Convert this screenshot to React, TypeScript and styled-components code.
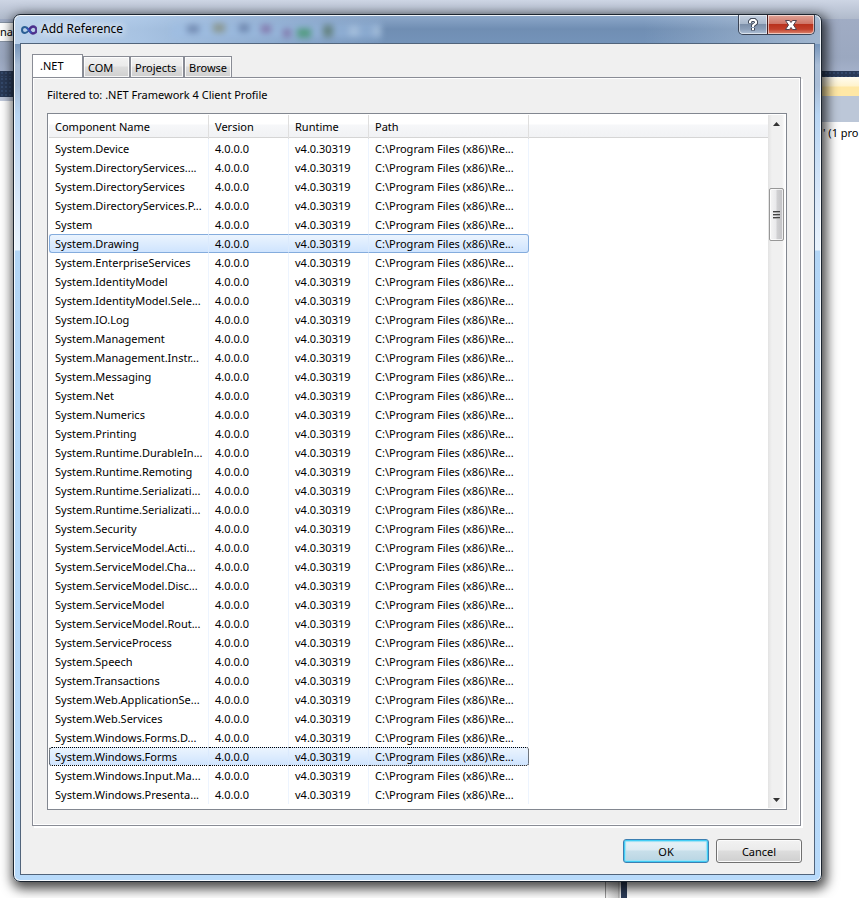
import React from "react";
import styled, { createGlobalStyle, css } from "styled-components";

const Global = createGlobalStyle`
  * { box-sizing: border-box; }
  body { margin: 0; font: 11px/19px "Noto Sans", "Open Sans", sans-serif; color: #000; background: #fff; }
  button, th { font: inherit; color: inherit; }
`;

const Desktop = styled.div`
  display: grid;
  grid-template-columns: minmax(0, 1fr);
  min-height: 100vh;
  overflow: hidden;
`;

const Ide = styled.div`
  grid-area: 1 / 1;
  display: flex;
  flex-direction: column;
`;

const MenuStrip = styled.div`
  height: 19px;
  background: linear-gradient(#cdd5e4, #b0bacb);
`;

const ToolStrip = styled.div`
  display: flex;
  align-items: flex-start;
  height: 52px;
  background: linear-gradient(#a0acc4, #9ba8c0 75%, #a3b0c9);
`;

const ToolBox = styled.div`
  width: 60px;
  height: 20px;
  margin-top: 3px;
  border: 1px solid #8591a2;
  border-left: 0;
  background: #fdfdfd;
  line-height: 18px;
`;

const Dark = styled.div`
  height: 6px;
  background: radial-gradient(#34496b 1px, #293955 1px) 0 0 / 4px 4px;
`;

const Body = styled.div`
  flex: 1;
  display: flex;
`;

const Editor = styled.div`
  width: 30px;
`;

const EditorWell = styled.div`
  height: 24px;
  background: radial-gradient(#34496b 1px, #293955 1px) 0 0 / 4px 4px;
  border-bottom: 4px solid #bfc8da;
`;

const Splitter = styled.div`
  align-self: flex-end;
  width: 22px;
  height: 24px;
  margin-left: 575px;
  border-right: 6px solid #2b3b58;
  background: linear-gradient(90deg, #999 1px, #f4f4f4 1px 3px, #eee 3px, #ccc 13px, #999 14px, #eee 15px);
`;

const Explorer = styled.div`
  flex: 0 0 72px;
  margin-left: auto;
`;

const ExplorerTitle = styled.div`
  height: 19px;
  background: linear-gradient(#fffcf0, #fff3cd 9px, #ffe8a6 10px);
`;

const ExplorerTools = styled.div`
  height: 26px;
  background: #bcc7d8;
`;

const ExplorerText = styled.p`
  margin: 1px 0 0 36px;
  white-space: nowrap;
`;

const Dialog = styled.section`
  grid-area: 1 / 1;
  align-self: start;
  z-index: 1;
  display: flex;
  flex-direction: column;
  margin: 14px 37px 16px 13px;
  padding: 0 6px 6px;
  border: 1px solid #1c2530;
  border-radius: 7px;
  background:
    linear-gradient(90deg, rgba(205, 225, 247, 0.8), rgba(190, 216, 245, 0.7) 16%, rgba(165, 192, 226, 0.5) 32%, rgba(112, 143, 180, 0) 46%, rgba(112, 143, 180, 0) 78%, rgba(190, 205, 222, 0.6)) 0 0 / 100% 29px no-repeat,
    linear-gradient(#8ea9cb 0, #708eb3 14px, #7493b9 28px, #a9bdd6 50px, #a9bdd6 70px, #b9d6f3 100px, #dceafa 190px, #e8f3fd 235px, #b3d6f6 236px, #b8dafa 100%);
  box-shadow: inset 0 0 0 1px rgba(255, 255, 255, 0.85), 2px 4px 12px 3px rgba(0, 0, 0, 0.7);
`;

const TitleBar = styled.header`
  display: flex;
  align-items: flex-start;
  height: 28px;
  padding-left: 1px;
`;

const Title = styled.h1`
  margin: 4px 0 0 4px;
  font-size: 12px;
  font-weight: 400;
  line-height: 20px;
  text-shadow: 0 0 8px #fff, 0 0 8px #fff;
`;

const Glass = styled.svg`
  width: 220px;
  height: 20px;
  margin: 6px auto 0 48px;
  filter: blur(3px);
  opacity: 0.5;
`;

const Logo = styled.svg`
  width: 16px;
  height: 10px;
  margin-top: 10px;
`;

const Captions = styled.div`
  display: flex;
  border: 1px solid #3b4557;
  border-top: 0;
  border-radius: 0 0 5px 5px;
  overflow: hidden;
`;

const Caption = styled.button<{ $close?: boolean }>`
  display: grid;
  place-items: center;
  width: ${(p) => (p.$close ? 47 : 28)}px;
  height: 19px;
  padding: 0;
  border: 0;
  border-left: ${(p) => (p.$close ? "1px solid #4a1d1d" : "0")};
  border-radius: ${(p) => (p.$close ? "0 0 4px 0" : "0 0 0 4px")};
  background: ${(p) =>
    p.$close
      ? "linear-gradient(#e0a397, #cf7668 45%, #b9321d 50%, #c2402b 75%, #dd8a73)"
      : "linear-gradient(#c5d0e0, #a9b8cc 45%, #7d90aa 50%, #8c9fb9 75%, #b2c3d8)"};
  box-shadow: inset 0 0 0 1px rgba(255, 255, 255, 0.55);
`;

const Client = styled.div`
  display: flex;
  flex-direction: column;
  padding: 10px 13px 11px 11px;
  border: 1px solid #51647b;
  background: #f0f0f0;
`;

const Tabs = styled.div`
  display: flex;
  align-items: flex-end;
  font-size: 12px;
`;

const Tab = styled.button<{ $active?: boolean; $width: number }>`
  width: ${(p) => p.$width}px;
  height: 21px;
  padding: 0 0 0 4px;
  border: 1px solid #898c95;
  border-bottom: 0;
  background: linear-gradient(#f2f2f2, #ebebeb 45%, #ddd 50%, #cfcfcf);
  box-shadow: inset 0 0 0 1px rgba(255, 255, 255, 0.8);
  font-size: 11px;
  text-align: left;
  white-space: nowrap;
  ${(p) =>
    p.$active &&
    css`
      height: 24px;
      margin-bottom: -1px;
      padding: 0 0 3px 7px;
      background: #fff;
    `}
`;

const TabPage = styled.div`
  padding: 7px 13px 15px 14px;
  border: 1px solid #898c95;
  background: #f0f0f0;
  box-shadow: inset 0 0 0 1px #fff, 2px 2px 0 #fff;
`;

const Filter = styled.p`
  margin: 0 0 9px;
`;

const ListBox = styled.div`
  display: flex;
  justify-content: space-between;
  padding: 1px;
  border: 1px solid #828790;
  background: #fff;
`;

const ListArea = styled.div`
  flex: 1;
  min-width: 0;
  padding-bottom: 4px;
  background: linear-gradient(#fff 0 9px, #f6f7f9 10px, #f1f2f4 22px, #d5d5d5 22px 23px, transparent 23px) 0 0 / 100% 24px no-repeat;
`;

const Table = styled.table`
  width: 480px;
  table-layout: fixed;
  border-collapse: separate;
  border-spacing: 0;
`;

const Head = styled.th<{ $width: number }>`
  width: ${(p) => p.$width}px;
  height: 24px;
  padding: 0 0 1px 6px;
  border-right: 1px solid #dfdfdf;
  text-align: left;
  white-space: nowrap;
`;

const Cell = styled.td`
  height: 19px;
  padding: 0 0 0 6px;
  border-right: 1px solid #edf4fe;
  line-height: 17px;
  white-space: nowrap;
  overflow: hidden;
`;

const edge = (state: string) => (state === "focused" ? "1px dotted #000" : "1px solid #84acdd");

const Row = styled.tr<{ $state?: "selected" | "focused" }>`
  ${(p) =>
    p.$state &&
    css`
      ${Cell} {
        background: linear-gradient(#ebf4fe, #cfe4fe);
        border-top: ${edge(p.$state)};
        border-bottom: ${edge(p.$state)};
        border-right-color: #dbeafd;
      }
      ${Cell}:first-child {
        padding-left: 5px;
        border-left: ${edge(p.$state)};
        border-radius: 3px 0 0 3px;
      }
      ${Cell}:last-child {
        border-right: ${edge(p.$state)};
        border-radius: 0 3px 3px 0;
      }
    `}
`;

const ScrollBar = styled.div`
  display: flex;
  flex-direction: column;
  width: 17px;
  background: linear-gradient(90deg, #e3e3e3, #f0f0f0 4px, #f0f0f0 14px, #fff);
`;

const Arrow = styled.button`
  display: grid;
  place-items: center;
  height: 17px;
  padding: 0;
  border: 0;
  background: none;
`;

const Track = styled.div`
  flex: 1;
  padding: 56px 1px 0;
`;

const Thumb = styled.div`
  display: grid;
  place-items: center;
  height: 53px;
  border: 1px solid #979797;
  border-radius: 2px;
  background: linear-gradient(90deg, #f5f5f5, #e9e9eb 45%, #d0d0d2 55%, #c1c1c4);
  box-shadow: inset 0 0 0 1px rgba(255, 255, 255, 0.7);
`;

const Actions = styled.footer`
  display: flex;
  justify-content: flex-end;
  gap: 7px;
  margin: 13px -1px 0 0;
`;

const PushButton = styled.button<{ $primary?: boolean }>`
  width: 86px;
  height: 24px;
  padding: 0;
  border: 1px solid ${(p) => (p.$primary ? "#3c7fb1" : "#707070")};
  border-radius: 3px;
  background: ${(p) =>
    p.$primary
      ? "linear-gradient(#eaf3f8, #dcebf3 45%, #c8dfea 50%, #b9d5e3)"
      : "linear-gradient(#f2f2f2, #ebebeb 45%, #ddd 50%, #cfcfcf)"};
  box-shadow: ${(p) => (p.$primary ? "inset 0 0 0 1px #41cdf5, inset 0 0 1px 2px #9be0f4" : "inset 0 0 0 1px #fbfbfb")};
`;

const PATH = "C:\\Program Files (x86)\\Re...";

const components = [
  "System.Device",
  "System.DirectoryServices....",
  "System.DirectoryServices",
  "System.DirectoryServices.P...",
  "System",
  "System.Drawing",
  "System.EnterpriseServices",
  "System.IdentityModel",
  "System.IdentityModel.Sele...",
  "System.IO.Log",
  "System.Management",
  "System.Management.Instr...",
  "System.Messaging",
  "System.Net",
  "System.Numerics",
  "System.Printing",
  "System.Runtime.DurableIn...",
  "System.Runtime.Remoting",
  "System.Runtime.Serializati...",
  "System.Runtime.Serializati...",
  "System.Security",
  "System.ServiceModel.Acti...",
  "System.ServiceModel.Cha...",
  "System.ServiceModel.Disc...",
  "System.ServiceModel",
  "System.ServiceModel.Rout...",
  "System.ServiceProcess",
  "System.Speech",
  "System.Transactions",
  "System.Web.ApplicationSe...",
  "System.Web.Services",
  "System.Windows.Forms.D...",
  "System.Windows.Forms",
  "System.Windows.Input.Ma...",
  "System.Windows.Presenta...",
];

const rowState = (name: string) =>
  name === "System.Drawing" ? "selected" : name === "System.Windows.Forms" ? "focused" : undefined;

export default function App() {
  return (
    <>
      <Global />
      <Desktop>
        <Ide>
          <MenuStrip />
          <ToolStrip><ToolBox>nag</ToolBox></ToolStrip>
          <Dark />
          <Body>
            <Editor><EditorWell /></Editor>
            <Splitter />
            <Explorer>
              <ExplorerTitle />
              <ExplorerTools />
              <ExplorerText>' (1 pro</ExplorerText>
            </Explorer>
          </Body>
        </Ide>
        <Dialog role="dialog" aria-labelledby="title">
          <TitleBar>
            <Logo viewBox="0 0 16 10" fill="none" aria-hidden="true">
              <path d="M8 5C6.500 3 5.500 2 4 2a3 3 0 0 0 0 6c1.500 0 2.500-1 4-3" stroke="#2b5f94" strokeWidth="2" />
              <path d="M8 5c1.500-2.500 2.500-3.500 4-3.500a3.500 3.500 0 0 1 0 7C10.500 8.500 9.500 7 8 5" stroke="#4b2d8c" strokeWidth="2.500" />
              <path d="M5.500 2.800C7 4 9 7 10.500 7.800" stroke="#35b" strokeWidth="1.500" />
            </Logo>
            <Title id="title">Add Reference</Title>
            <Glass viewBox="0 0 220 20" aria-hidden="true">
              <path d="M0 10h210" stroke="#9fc0e6" strokeWidth="16" />
              <path d="M16 8h12M68 7h10" stroke="#4b5f8c" strokeWidth="8" />
              <path d="M42 7h12" stroke="#7f7d4e" strokeWidth="9" />
              <path d="M90 8h10M112 12h8" stroke="#7b4b8e" strokeWidth="8" />
              <path d="M126 12h14" stroke="#1f9438" strokeWidth="9" />
              <path d="M152 10h10" stroke="#4c6b45" strokeWidth="12" />
              <path d="M178 10h10M202 10h8" stroke="#cfe5fb" strokeWidth="10" />
            </Glass>
            <Captions>
              <Caption aria-label="Help">
                <svg width="10" height="14" viewBox="0 0 10 14" fill="none" aria-hidden="true">
                  <path d="M2 5.500V3.500L3.500 2h3L8 3.500V5L5 7.500V9M5 10v2.500" stroke="#444c5c" strokeWidth="4" />
                  <path d="M2 5V3.500L3.500 2h3L8 3.500V5L5 7.500V9M5 10v2" stroke="#fff" strokeWidth="2" />
                </svg>
              </Caption>
              <Caption $close aria-label="Close">
                <svg width="14" height="12" viewBox="0 0 14 12" aria-hidden="true">
                  <path d="M1.500 1.500h4L7 3.500l1.500-2h4L9.500 6l3 4.500h-4L7 8.500l-1.500 2h-4L4.500 6z" fill="#fff" stroke="#53454f" />
                </svg>
              </Caption>
            </Captions>
          </TitleBar>
          <Client>
            <Tabs role="tablist">
              <Tab role="tab" aria-selected $active $width={51}>.NET</Tab>
              <Tab role="tab" $width={47}>COM</Tab>
              <Tab role="tab" $width={54}>Projects</Tab>
              <Tab role="tab" $width={48}>Browse</Tab>
            </Tabs>
            <TabPage role="tabpanel">
              <Filter>Filtered to: .NET Framework 4 Client Profile</Filter>
              <ListBox>
                <ListArea>
                  <Table>
                    <thead>
                      <tr>
                        <Head $width={160}>Component Name</Head>
                        <Head $width={80}>Version</Head>
                        <Head $width={80}>Runtime</Head>
                        <Head $width={160}>Path</Head>
                      </tr>
                    </thead>
                    <tbody>
                      {components.map((name, i) => (
                        <Row key={i} $state={rowState(name)}>
                          <Cell>{name}</Cell>
                          <Cell>4.0.0.0</Cell>
                          <Cell>v4.0.30319</Cell>
                          <Cell>{PATH}</Cell>
                        </Row>
                      ))}
                    </tbody>
                  </Table>
                </ListArea>
                <ScrollBar>
                  <Arrow aria-label="Scroll up">
                    <svg width="7" height="4" aria-hidden="true"><path d="M3.500 0L7 4H0z" fill="#333" /></svg>
                  </Arrow>
                  <Track>
                    <Thumb>
                      <svg width="7" height="8" aria-hidden="true"><path d="M0 .5h7M0 3.500h7M0 6.500h7" stroke="#444" /><path d="M0 1.500h7M0 4.500h7M0 7.500h7" stroke="#aaa" /></svg>
                    </Thumb>
                  </Track>
                  <Arrow aria-label="Scroll down">
                    <svg width="7" height="4" aria-hidden="true"><path d="M0 0h7L3.500 4z" fill="#333" /></svg>
                  </Arrow>
                </ScrollBar>
              </ListBox>
            </TabPage>
            <Actions>
              <PushButton $primary>OK</PushButton>
              <PushButton>Cancel</PushButton>
            </Actions>
          </Client>
        </Dialog>
      </Desktop>
    </>
  );
}
